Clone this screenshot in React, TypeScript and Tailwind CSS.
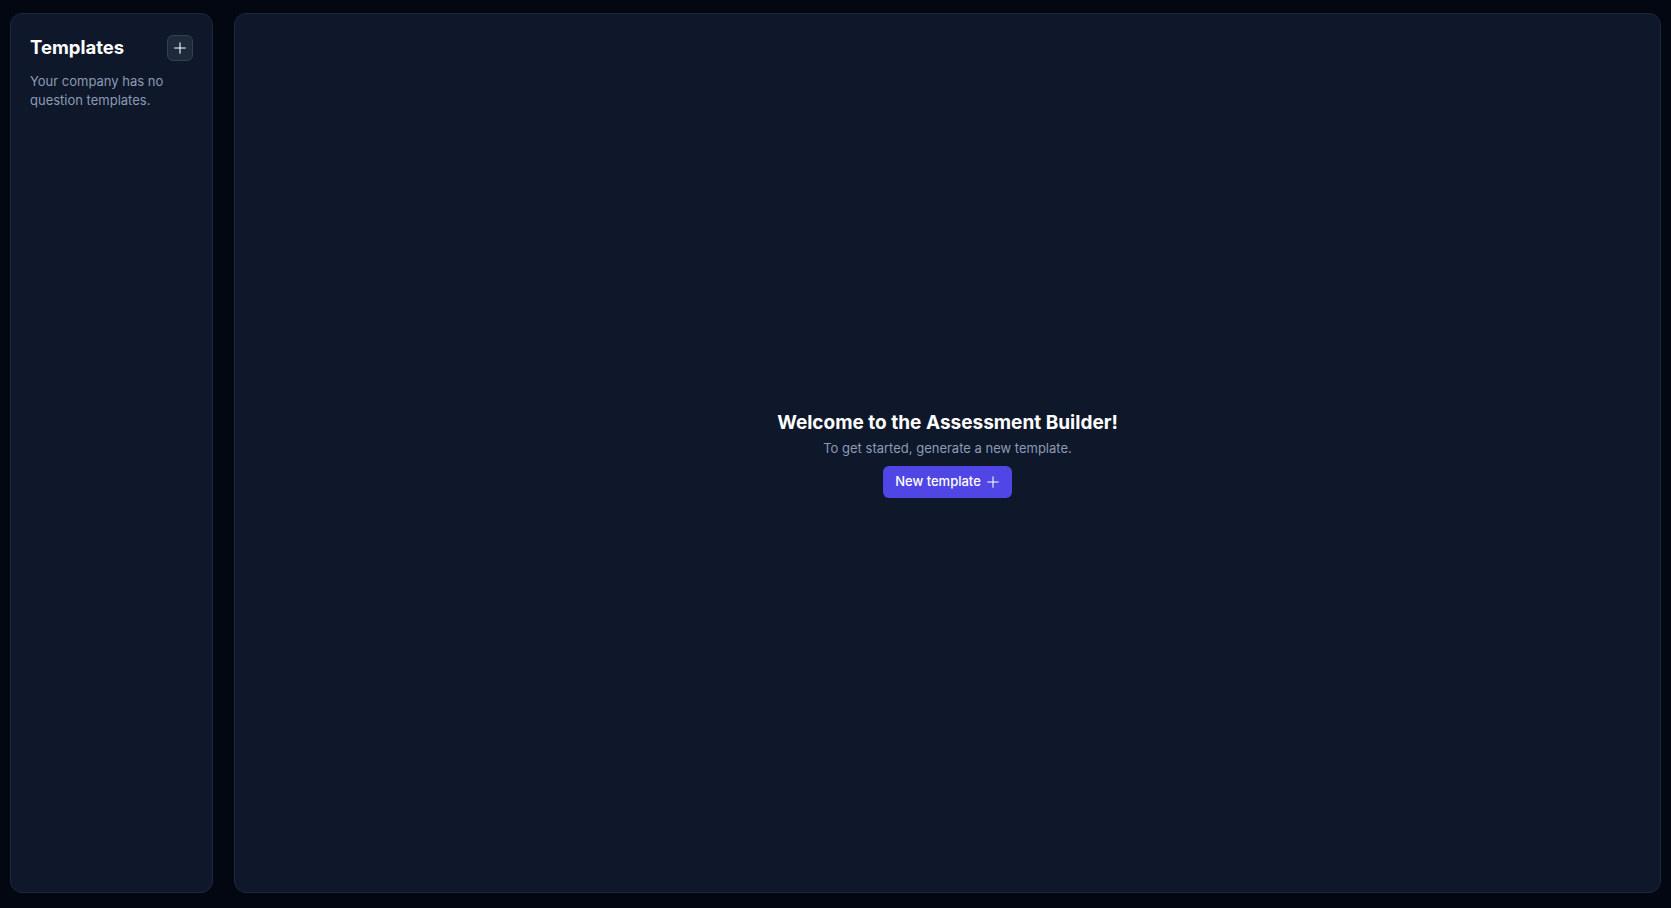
import React from "react";

function Plus({ className }: { className?: string }) {
  return (
    <svg className={className} viewBox="0 0 24 24" fill="none" stroke="currentColor" strokeWidth={1.6} strokeLinecap="round">
      <path d="M12 4v16M4 12h16" />
    </svg>
  );
}

export default function App() {
  return (
    <div
      className="h-[908px] w-full bg-[#030712] flex gap-[21px] pl-[10px] pr-[10px] pt-[13px] pb-[15px]"
      style={{ fontFamily: "Inter, 'Noto Sans', sans-serif" }}
    >
      <aside className="w-[203px] shrink-0 rounded-xl border border-[#1e293b] bg-[#0f172a] pl-[19px] pr-5 pt-5">
        <div className="flex items-center justify-between">
          <h2 className="text-[18.5px] leading-7 font-bold text-white -mt-[1px]">Templates</h2>
          <button className="flex h-[26px] w-[26px] items-center justify-center rounded-md border border-[#334155] bg-[#1e293b] text-white mr-[-1px]">
            <Plus className="h-4 w-4" />
          </button>
        </div>
        <p className="mt-[11px] text-[13px] leading-[19px] text-[#8b9bb5]">
          Your company has no question templates.
        </p>
      </aside>
      <main className="flex-1 rounded-xl border border-[#1e293b] bg-[#0f172a] flex flex-col items-center justify-center">
        <h1 className="text-[19px] leading-7 font-bold text-white">Welcome to the Assessment Builder!</h1>
        <p className="mt-[1px] text-[13px] leading-5 text-[#8b9bb5]">To get started, generate a new template.</p>
        <button className="mt-2 flex h-8 items-center gap-1 rounded-md bg-[#4f46e5] pl-3 pr-[11px] pt-[1px] text-[13px] font-medium text-white">
          New template
          <Plus className="h-4 w-4" />
        </button>
      </main>
    </div>
  );
}
